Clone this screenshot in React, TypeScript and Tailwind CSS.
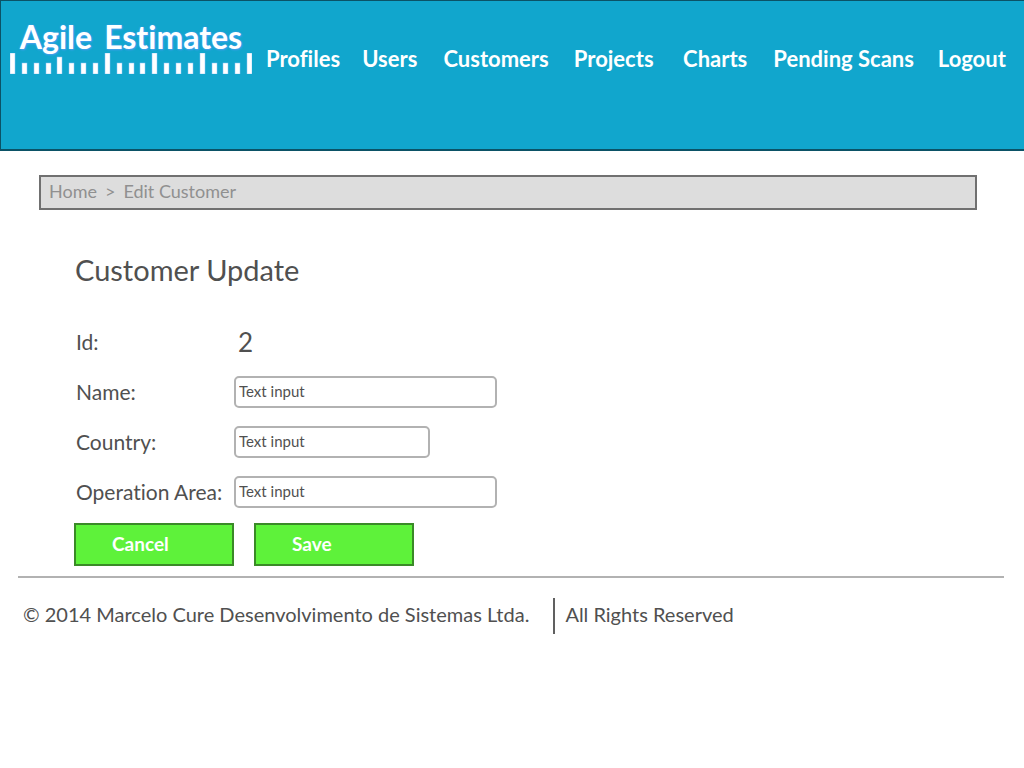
import type { ReactNode } from "react";

const navItems = ["Profiles", "Users", "Customers", "Projects", "Charts", "Pending Scans", "Logout"];

const ticks = Array.from({ length: 21 }, (_, i) => ({
  x: Math.round(i * 11.86),
  y: i % 4 === 0 ? (i === 4 ? 4 : 0) : 10,
}));

function Logo() {
  return (
    <a href="#" aria-label="Agile Estimates" className="flex w-[242px] shrink-0 flex-col text-white">
      <span className="flex h-8 items-center justify-center gap-3 text-[32px] leading-8 font-bold whitespace-nowrap [text-shadow:0_0_2px_#4a9ff0,1px_1px_2px_#4a9ff0]">
        <span>Agile</span>
        <span>Estimates</span>
      </span>
      <svg viewBox="0 0 242 21" className="h-[21px] w-[242px]" fill="currentColor" aria-hidden="true">
        {ticks.map((t) => (
          <rect key={t.x} x={t.x} y={t.y} width="5" height={21 - t.y} stroke="#8fc4f5" strokeWidth="0.5" />
        ))}
      </svg>
    </a>
  );
}

function Row({ label, id, children }: { label: string; id: string; children: ReactNode }) {
  return (
    <div className="flex h-[50px] items-center">
      <label htmlFor={id} className="w-[159px] shrink-0 pl-px text-[21px] leading-7 whitespace-nowrap">
        {label}
      </label>
      {children}
    </div>
  );
}

const field =
  "h-8 rounded-[5px] border-2 border-[#b2b2b2] bg-white px-[3px] pb-0.5 text-[15px] text-[#505050] placeholder:text-[#505050] placeholder:opacity-100";
const action =
  "h-[43px] w-40 border-2 border-[#3a8a27] bg-[#5ef23a] pl-9 text-left text-[19px] font-bold text-white";

export default function App() {
  return (
    <div className="min-h-screen bg-white font-['Lato',sans-serif] text-[#505050] [font-variant-ligatures:none]">
      <header className="flex h-[151px] items-start border border-r-0 border-b-2 border-[#0b5266] bg-[#11a6cd] pt-5 pr-3 pl-[9px]">
        <Logo />
        <nav className="ml-3.5 grid flex-1 grid-cols-[96fr_81fr_130fr_109fr_90fr_164fr_74fr] pt-[22px] text-[22px] leading-8 font-bold whitespace-nowrap text-white">
          {navItems.map((item) => (
            <a key={item} href="#">
              {item}
            </a>
          ))}
        </nav>
      </header>

      <div className="mt-6 mr-[47px] ml-[39px] flex h-[35px] items-center border-2 border-[#707070] bg-[#dddddd] px-2 pb-0.5 text-[18px] text-[#909090]">
        <nav aria-label="Breadcrumb" className="flex gap-2">
          <a href="#">Home</a>
          <span>&gt;</span>
          <span>Edit Customer</span>
        </nav>
      </div>

      <main className="pt-10 pl-[75px]">
        <h1 className="text-[29px] leading-10">Customer Update</h1>
        <form className="pt-[27px]" onSubmit={(e) => e.preventDefault()}>
          <Row label="Id:" id="customer-id">
            <output id="customer-id" className="pl-1 text-[26px] leading-7">
              2
            </output>
          </Row>
          <Row label="Name:" id="name">
            <input id="name" placeholder="Text input" className={`${field} w-[263px]`} />
          </Row>
          <Row label="Country:" id="country">
            <input id="country" placeholder="Text input" className={`${field} w-[196px]`} />
          </Row>
          <Row label="Operation Area:" id="area">
            <input id="area" placeholder="Text input" className={`${field} w-[263px]`} />
          </Row>
          <div className="-ml-px flex gap-5 pt-1.5">
            <button type="button" className={action}>Cancel</button>
            <button type="submit" className={action}>Save</button>
          </div>
        </form>
      </main>

      <footer className="mt-2.5 mr-5 ml-[18px] flex items-start gap-2.5 border-t-2 border-[#b2b2b2] pt-5 pl-[5px] text-[20px] leading-8">
        <span className="pr-3.5">© 2014 Marcelo Cure Desenvolvimento de Sistemas Ltda.</span>
        <span className="h-9 w-0.5 bg-[#606060]" />
        <span>All Rights Reserved</span>
      </footer>
    </div>
  );
}
